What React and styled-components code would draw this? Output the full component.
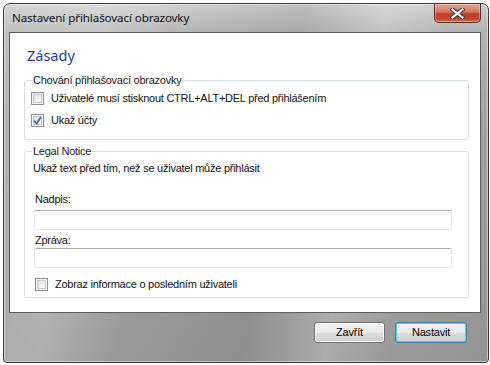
import React from 'react'
import styled, { createGlobalStyle } from 'styled-components'

const Global = createGlobalStyle`
  html, body { margin: 0; padding: 0; background: #ffffff; }
  body { font-family: "Liberation Sans", Arial, sans-serif; font-size: 11px; letter-spacing: -0.25px; color: #000; }
  * { box-sizing: border-box; }
`

const Page = styled.div`
  padding: 3px 2px 3px 3px;
  width: 490px;
  height: 365px;
`

const Frame = styled.div`
  width: 486px;
  height: 360px;
  border: 1px solid #3a3a3a;
  border-radius: 7px 7px 4px 4px;
  display: flex;
  flex-direction: column;
  padding: 0 7px 0 5px;
  background:
    linear-gradient(100deg, rgba(255,255,255,0.12) 0%, rgba(255,255,255,0.22) 18%, rgba(0,0,0,0) 32%, rgba(0,0,0,0.08) 55%, rgba(255,255,255,0.18) 70%, rgba(255,255,255,0) 82%, rgba(0,0,0,0.04) 100%),
    linear-gradient(180deg, #d0d0d0 0px, #b6b6b6 28px, #a5a5a5 120px, #999999 100%);
  box-shadow: inset 0 0 0 1px rgba(255,255,255,0.45);
`

const TitleBar = styled.div`
  height: 28px;
  display: flex;
  align-items: flex-start;
  justify-content: space-between;
`

const Title = styled.div`
  font-family: "Noto Sans", "Open Sans", sans-serif;
  font-size: 11.6px;
  letter-spacing: -0.1px;
  color: #101010;
  padding: 6px 0 0 3px;
`

const CloseButton = styled.div`
  width: 47px;
  height: 19px;
  border: 1px solid #5b2a22;
  border-top: none;
  border-radius: 0 0 5px 5px;
  background: linear-gradient(180deg, #e8a493 0%, #d47561 45%, #c13b22 55%, #c5482d 85%, #d77a5a 100%);
  box-shadow: inset 0 0 0 1px rgba(255,255,255,0.35);
  display: flex;
  align-items: center;
  justify-content: center;
`

const Client = styled.div`
  height: 281px;
  background: #ffffff;
  border: 1px solid #5d5d5d;
  padding: 12px 11px 0 14px;
  display: flex;
  flex-direction: column;
`

const Heading = styled.div`
  font-family: "Noto Sans", "Open Sans", sans-serif;
  font-size: 14.5px;
  letter-spacing: 0;
  color: #1e3aa6;
  padding-left: 3px;
  height: 29px;
`

const Group = styled.fieldset`
  margin: 0 0 ${p => p.$gap || 0}px 0;
  padding: 0 8px ${p => p.$pb || 0}px 5px;
  border: 1px solid #d5dfe5;
  border-radius: 3px;
  display: flex;
  flex-direction: column;
`

const Legend = styled.legend`
  padding: 0 1px;
  margin-left: 2px;
  color: #1a1a1a;
  line-height: 13px;
`

const CheckRow = styled.label`
  display: flex;
  align-items: center;
  gap: 7px;
  height: 22px;
  padding-left: ${p => p.$indent || 1}px;
  margin-top: ${p => p.$mt || 0}px;
  color: #111;
`

const Box = styled.span`
  width: 13px;
  height: 13px;
  border: 1px solid #8e8f8f;
  background: linear-gradient(135deg, #dcdcdc 0%, #f2f2f2 60%, #ffffff 100%);
  box-shadow: inset 0 0 0 1px #f4f4f4, inset 0 0 0 2px #c8c8c8;
  display: flex;
  align-items: center;
  justify-content: center;
`

const Text = styled.div`
  color: #111;
  padding: 3px 0 0 3px;
  height: 34px;
  line-height: 14px;
`

const FieldLabel = styled.div`
  color: #111;
  padding-left: 5px;
  margin-top: ${p => p.$mt || 0}px;
  height: ${p => p.$h}px;
  line-height: 14px;
`

const Input = styled.div`
  margin: 0 8px 0 4px;
  height: 20px;
  border: 1px solid #e3e9ef;
  border-top-color: #abadb3;
  border-radius: 2px;
  background: #fff;
`

const Footer = styled.div`
  flex: 1;
  display: flex;
  justify-content: flex-end;
  align-items: flex-start;
  gap: 10px;
  padding: 9px 14px 0 0;
`

const Button = styled.button`
  width: ${p => p.$w}px;
  height: 21px;
  font-family: "Liberation Sans", Arial, sans-serif;
  font-size: 11px;
  letter-spacing: -0.2px;
  color: #000;
  border: 1px solid ${p => (p.$default ? '#3c7fb1' : '#707070')};
  border-radius: 3px;
  background: linear-gradient(180deg, #f2f2f2 0%, #ebebeb 50%, #dddddd 51%, #cfcfcf 100%);
  box-shadow: inset 0 0 0 1px ${p => (p.$default ? '#48d0fb' : '#fcfcfc')};
  padding: 0 0 1px 0;
`

function Check({ checked }) {
  return (
    <Box>
      {checked && (
        <svg width="9" height="9" viewBox="0 0 9 9">
          <path d="M1 4.5 L3.5 7.5 L8 1" fill="none" stroke="#4a62a8" strokeWidth="1.8" />
        </svg>
      )}
    </Box>
  )
}

export default function App() {
  return (
    <Page>
      <Global />
      <Frame>
        <TitleBar>
          <Title>Nastavení přihlašovací obrazovky</Title>
          <CloseButton>
            <svg width="15" height="11" viewBox="0 0 15 11">
              <path d="M2.5 1.5 L12.5 9.5 M12.5 1.5 L2.5 9.5" stroke="#3b3b4a" strokeWidth="4.2" strokeLinecap="square" />
              <path d="M2.5 1.5 L12.5 9.5 M12.5 1.5 L2.5 9.5" stroke="#ffffff" strokeWidth="2.2" strokeLinecap="square" />
            </svg>
          </CloseButton>
        </TitleBar>
        <Client>
          <Heading>Zásady</Heading>
          <Group $gap={5} $pb={8}>
            <Legend>Chování přihlašovací obrazovky</Legend>
            <CheckRow>
              <Check />
              Uživatelé musí stisknout CTRL+ALT+DEL před přihlášením
            </CheckRow>
            <CheckRow>
              <Check checked />
              Ukaž účty
            </CheckRow>
          </Group>
          <Group $pb={2}>
            <Legend>Legal Notice</Legend>
            <Text>Ukaž text před tím, než se uživatel může přihlásit</Text>
            <FieldLabel $h={18}>Nadpis:</FieldLabel>
            <Input />
            <FieldLabel $mt={3} $h={15}>Zpráva:</FieldLabel>
            <Input />
            <CheckRow $mt={5} $indent={5}>
              <Check />
              Zobraz informace o posledním uživateli
            </CheckRow>
          </Group>
        </Client>
        <Footer>
          <Button $w={71}>Zavřít</Button>
          <Button $w={72} $default>Nastavit</Button>
        </Footer>
      </Frame>
    </Page>
  )
}
